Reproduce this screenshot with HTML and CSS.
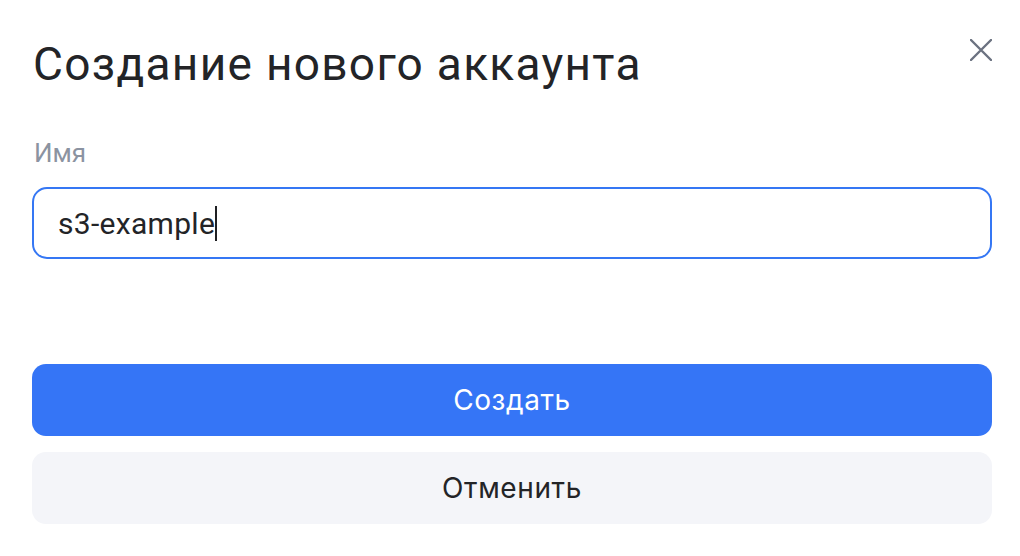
FILE: index.html
```html
<!DOCTYPE html>
<html lang="ru">
<head>
    <meta charset="UTF-8">
    <meta name="viewport" content="width=device-width, initial-scale=1.0">
    <title>Создание нового аккаунта</title>
    <link rel="stylesheet" href="styles.css">
</head>
<body>
    <div class="dialog">
        <div class="dialog-header">
            <h1>Создание нового аккаунта</h1>
            <button class="close-button" aria-label="Закрыть">
                <svg width="22" height="22" viewBox="0 0 22 22">
                    <path d="M1 1 L21 21 M21 1 L1 21" stroke="#6b7280" stroke-width="2.4" stroke-linecap="round" fill="none"/>
                </svg>
            </button>
        </div>

        <label class="field-label">Имя</label>
        <div class="field-input">
            <span class="field-value">s3-example</span><span class="caret"></span>
        </div>

        <div class="actions">
            <button class="btn btn-primary">Создать</button>
            <button class="btn btn-secondary">Отменить</button>
        </div>
    </div>
</body>
</html>
```

FILE: styles.css
```css
body {
    margin: 0;
    padding: 0;
    background-color: #ffffff;
    font-family: Roboto, "Noto Sans", sans-serif;
    color: #1f2023;
}

.dialog {
    padding: 38px 28px 0 32px;
}

.dialog-header {
    display: flex;
    justify-content: space-between;
    align-items: flex-start;
}

h1 {
    margin: 0;
    padding-left: 1px;
    font-size: 46px;
    font-weight: 400;
    line-height: 52px;
    letter-spacing: 1.3px;
    color: #232427;
}

.close-button {
    margin: 1px 0 0 0;
    padding: 0;
    border: none;
    background: none;
    width: 22px;
    height: 22px;
    cursor: pointer;
    display: flex;
}

.field-label {
    display: block;
    margin-top: 47px;
    padding-left: 2px;
    font-size: 26px;
    line-height: 32px;
    color: #8b93a1;
}

.field-input {
    margin-top: 18px;
    height: 72px;
    box-sizing: border-box;
    border: 2px solid #3577f4;
    border-radius: 15px;
    padding: 0 24px;
    display: flex;
    align-items: center;
    font-size: 30px;
    letter-spacing: 0.3px;
    color: #232427;
}

.caret {
    display: inline-block;
    width: 2px;
    height: 35px;
    margin-left: 0;
    background-color: #1f2023;
}

.actions {
    margin-top: 105px;
    display: flex;
    flex-direction: column;
    gap: 16px;
}

.btn {
    height: 72px;
    border: none;
    border-radius: 14px;
    font-family: Inter, "Noto Sans", sans-serif;
    font-size: 28px;
    font-weight: 400;
    letter-spacing: 0.6px;
    cursor: pointer;
}

.btn-primary {
    background-color: #3575f6;
    color: #ffffff;
}

.btn-secondary {
    background-color: #f4f5f9;
    color: #232427;
}
```
